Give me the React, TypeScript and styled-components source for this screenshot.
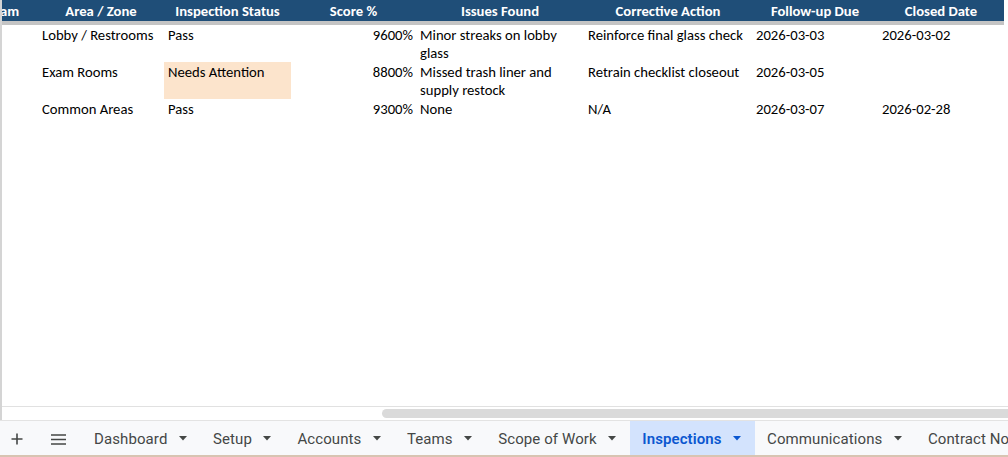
import React from 'react';
import styled, { createGlobalStyle } from 'styled-components';

const GlobalStyle = createGlobalStyle`
  html, body {
    margin: 0;
    padding: 0;
    background: #ffffff;
    overflow: hidden;
  }
`;

// first column is mostly scrolled off to the left
const COLS = '70px 126px 127px 125px 168px 168px 126px 126px';

const Window = styled.div`
  width: 1008px;
  height: 457px;
  display: flex;
  flex-direction: column;
  overflow: hidden;
  font-family: Carlito, Lato, 'Liberation Sans', sans-serif;
`;

const SheetArea = styled.div`
  flex: 1;
  display: flex;
  flex-direction: column;
  overflow: hidden;
  border-left: 2px solid #d4d4d4;
`;

const Grid = styled.div`
  display: grid;
  grid-template-columns: ${COLS};
  margin-left: -34px;
  width: max-content;
`;

const HeaderRow = styled.div`
  display: contents;
`;

const HeaderCell = styled.div`
  background: #1f4e78;
  color: #ffffff;
  font-weight: 700;
  font-size: 14.67px;
  height: 21px;
  line-height: 22px;
  text-align: center;
  white-space: nowrap;
  border-bottom: 4px solid #c4c4c4;
`;

const Cell = styled.div<{ $align?: 'left' | 'right'; $fill?: string }>`
  font-size: 14.67px;
  line-height: 18px;
  color: #000000;
  padding: 1px ${p => (p.$align === 'right' ? '3px' : '4px')} 0 4px;
  text-align: ${p => p.$align ?? 'left'};
  background: ${p => p.$fill ?? 'transparent'};
`;

const ScrollStrip = styled.div`
  margin-top: auto;
  height: 13px;
  border-top: 1px solid #e1e1e1;
  display: flex;
  align-items: center;
  padding-left: 380px;
`;

const ScrollThumb = styled.div`
  flex: 1;
  height: 9px;
  border-radius: 5px 0 0 5px;
  background: #dadada;
`;

const TabBar = styled.div`
  height: 37px;
  padding-top: 2px;
  box-sizing: border-box;
  display: flex;
  align-items: stretch;
  background: #f8f9fb;
  border-top: 1px solid #e3e3e3;
  border-bottom: 2px solid #d8c4b2;
  font-family: Roboto, 'Noto Sans', sans-serif;
  font-size: 15px;
  color: #444746;
  white-space: nowrap;
`;

const IconButton = styled.div<{ $w: number }>`
  width: ${p => p.$w}px;
  display: flex;
  align-items: center;
  justify-content: center;
  flex-shrink: 0;
`;

const Tab = styled.div<{ $active?: boolean }>`
  display: flex;
  align-items: center;
  gap: 11.5px;
  padding: 0 14px 0 12px;
  margin-top: -2px;
  flex-shrink: 0;
  background: ${p => (p.$active ? '#d3e3fd' : 'transparent')};
  color: ${p => (p.$active ? '#0b57d0' : '#444746')};
  font-weight: ${p => (p.$active ? 600 : 400)};
  letter-spacing: 0.1px;
`;

const TabLabel = styled.span`
  padding-top: 1px;
`;

const Caret = ({ color }: { color: string }) => (
  <svg width="8" height="5" viewBox="0 0 8 5" style={{ marginTop: 1 }}>
    <path d="M0 0h8L4 4.5z" fill={color} />
  </svg>
);

const PlusIcon = () => (
  <svg width="12" height="12" viewBox="0 0 12 12">
    <path d="M6 0.5v11M0.5 6h11" stroke="#444746" strokeWidth="1.6" />
  </svg>
);

const MenuIcon = () => (
  <svg width="15" height="11" viewBox="0 0 15 11">
    <path d="M0 1h15M0 5.5h15M0 10h15" stroke="#444746" strokeWidth="1.5" />
  </svg>
);

const headers = ['Team', 'Area / Zone', 'Inspection Status', 'Score %', 'Issues Found', 'Corrective Action', 'Follow-up Due', 'Closed Date'];

interface Row {
  team: string;
  area: string;
  status: string;
  score: string;
  issues: string;
  action: string;
  due: string;
  closed: string;
}

const rows: Row[] = [
  { team: '', area: 'Lobby / Restrooms', status: 'Pass', score: '9600%', issues: 'Minor streaks on lobby glass', action: 'Reinforce final glass check', due: '2026-03-03', closed: '2026-03-02' },
  { team: '', area: 'Exam Rooms', status: 'Needs Attention', score: '8800%', issues: 'Missed trash liner and supply restock', action: 'Retrain checklist closeout', due: '2026-03-05', closed: '' },
  { team: '', area: 'Common Areas', status: 'Pass', score: '9300%', issues: 'None', action: 'N/A', due: '2026-03-07', closed: '2026-02-28' },
];

const tabs = ['Dashboard', 'Setup', 'Accounts', 'Teams', 'Scope of Work', 'Inspections', 'Communications', 'Contract Notes'];

export default function App() {
  return (
    <Window>
      <GlobalStyle />
      <SheetArea>
        <Grid>
          <HeaderRow>
            {headers.map(h => (
              <HeaderCell key={h}>{h}</HeaderCell>
            ))}
          </HeaderRow>
          {rows.map(r => (
            <React.Fragment key={r.area}>
              <Cell>{r.team}</Cell>
              <Cell>{r.area}</Cell>
              <Cell $fill={r.status === 'Needs Attention' ? '#fce4cc' : undefined}>{r.status}</Cell>
              <Cell $align="right">{r.score}</Cell>
              <Cell>{r.issues}</Cell>
              <Cell>{r.action}</Cell>
              <Cell>{r.due}</Cell>
              <Cell>{r.closed}</Cell>
            </React.Fragment>
          ))}
        </Grid>
        <ScrollStrip>
          <ScrollThumb />
        </ScrollStrip>
      </SheetArea>
      <TabBar>
        <IconButton $w={34}>
          <PlusIcon />
        </IconButton>
        <IconButton $w={48}>
          <MenuIcon />
        </IconButton>
        {tabs.map(t => (
          <Tab key={t} $active={t === 'Inspections'}>
            <TabLabel>{t}</TabLabel>
            <Caret color={t === 'Inspections' ? '#0b57d0' : '#444746'} />
          </Tab>
        ))}
      </TabBar>
    </Window>
  );
}
